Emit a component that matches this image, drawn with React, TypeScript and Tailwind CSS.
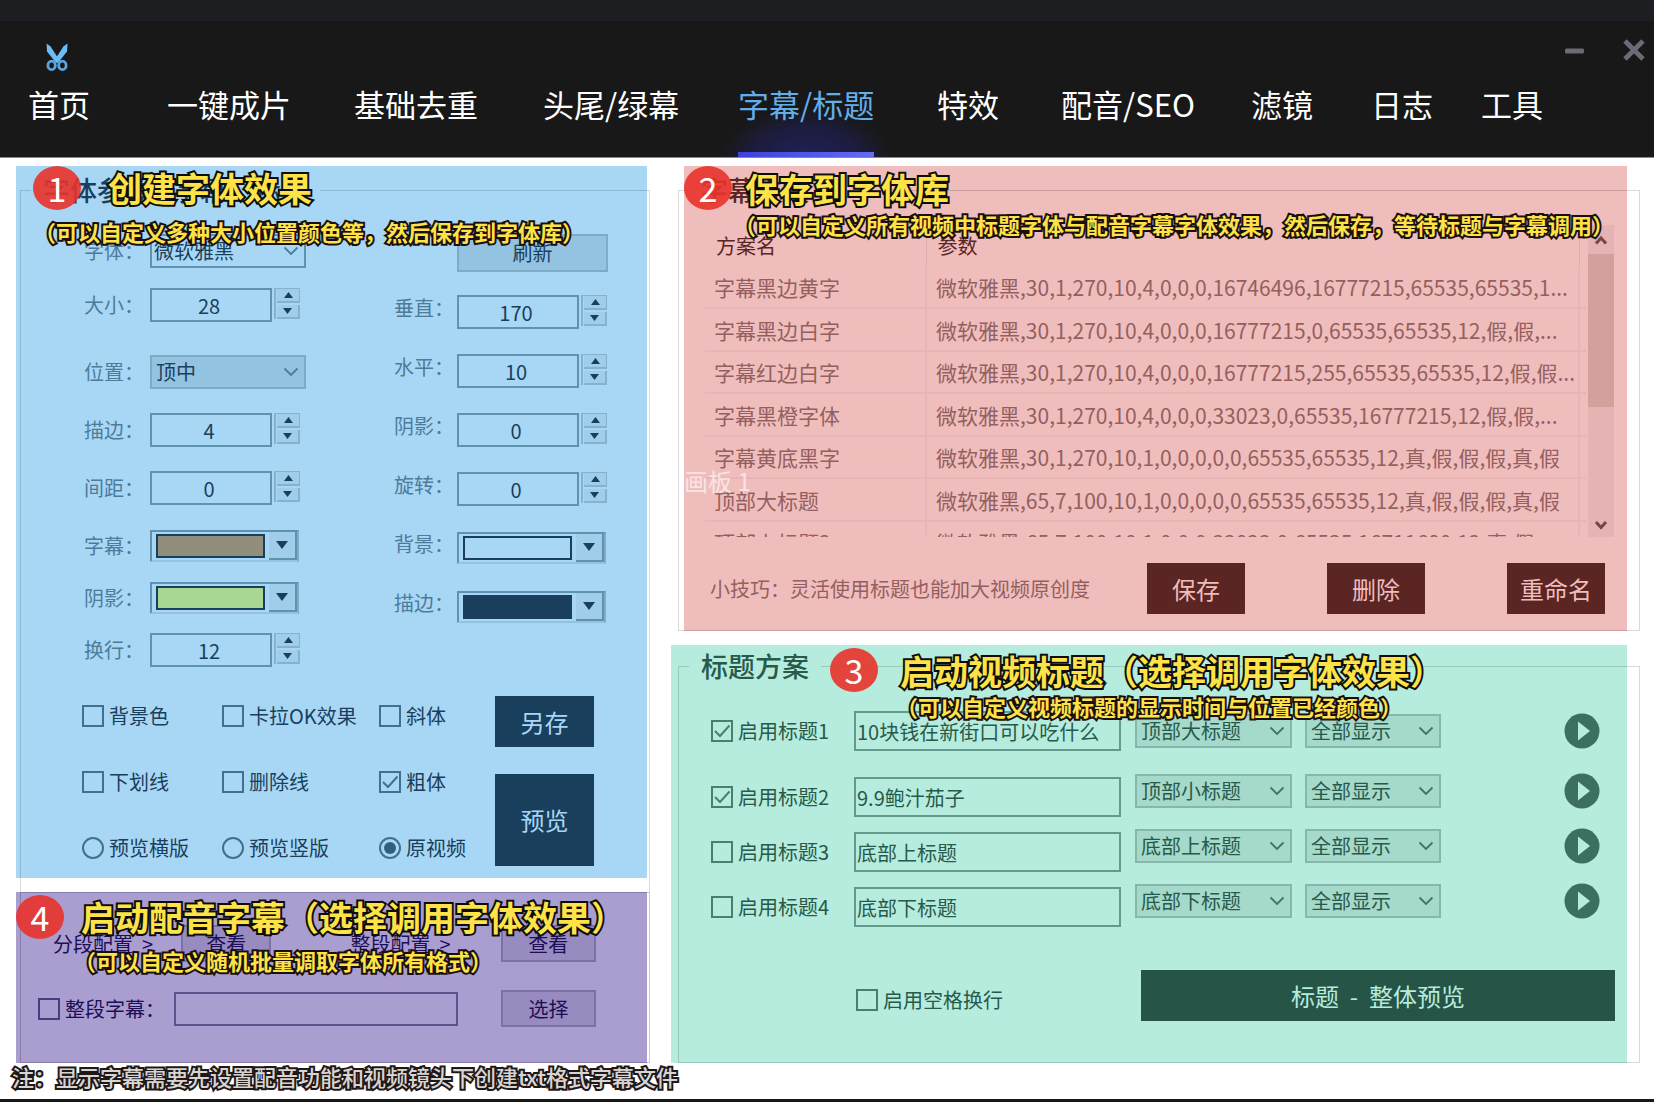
import React, { useState } from "react";

const tabs = ["首页", "一键成片", "基础去重", "头尾/绿幕", "字幕/标题", "特效", "配音/SEO", "滤镜", "日志", "工具"];

const schemes = [
  ["字幕黑边黄字", "微软雅黑,30,1,270,10,4,0,0,0,16746496,16777215,65535,65535,1..."],
  ["字幕黑边白字", "微软雅黑,30,1,270,10,4,0,0,0,16777215,0,65535,65535,12,假,假,..."],
  ["字幕红边白字", "微软雅黑,30,1,270,10,4,0,0,0,16777215,255,65535,65535,12,假,假..."],
  ["字幕黑橙字体", "微软雅黑,30,1,270,10,4,0,0,0,33023,0,65535,16777215,12,假,假,..."],
  ["字幕黄底黑字", "微软雅黑,30,1,270,10,1,0,0,0,0,0,65535,65535,12,真,假,假,假,真,假"],
  ["顶部大标题", "微软雅黑,65,7,100,10,1,0,0,0,0,0,65535,65535,12,真,假,假,假,真,假"],
  ["顶部上标题2", "微软雅黑,65,7,100,10,1,0,0,0,33023,0,65535,16711680,12,真,假"],
];

const titleRows = [
  { id: 1, on: true, text: "10块钱在新街口可以吃什么", preset: "顶部大标题", gap: "", lift: "" },
  { id: 2, on: true, text: "9.9鲍汁茄子", preset: "顶部小标题", gap: "mt-[26px]", lift: "pb-3" },
  { id: 3, on: false, text: "底部上标题", preset: "底部上标题", gap: "mt-[15px]", lift: "pb-3" },
  { id: 4, on: false, text: "底部下标题", preset: "底部下标题", gap: "mt-[15px]", lift: "pb-3" },
];

function Scissors() {
  return (
    <svg viewBox="0 0 24 28" className="h-7 w-6" fill="none" aria-hidden="true">
      <path d="M1.5 0.5 L2 8.5 L9.5 18 L12 20 L14 16.5 L5.6 3.6 Z" fill="#6cbcf5" />
      <path d="M22.5 0.5 L22 8.5 L14.5 18 L12 20 L10 16.5 L18.4 3.6 Z" fill="#6cbcf5" />
      <ellipse cx="6.6" cy="22.4" rx="3.7" ry="4.2" stroke="#5aa7e0" strokeWidth="2.8" />
      <ellipse cx="17.4" cy="22.4" rx="3.7" ry="4.2" stroke="#5aa7e0" strokeWidth="2.8" />
    </svg>
  );
}

function Chevron({ className }: { className: string }) {
  return (
    <svg viewBox="0 0 16 10" className={`pointer-events-none absolute right-[7px] top-1/2 h-[10px] w-4 -translate-y-1/2 ${className}`} fill="none" aria-hidden="true">
      <path d="M1.5 1.5 L8 8 L14.5 1.5" stroke="currentColor" strokeWidth="1.8" />
    </svg>
  );
}

function Triangle({ up = false, className }: { up?: boolean; className: string }) {
  return (
    <svg viewBox="0 0 12 8" className={className} aria-hidden="true">
      <path d={up ? "M6 0 L12 8 L0 8 Z" : "M0 0 L12 0 L6 8 Z"} fill="#1a3f5c" />
    </svg>
  );
}

function Tick({ label, checked = false, tone, labelTone }: { label: string; checked?: boolean; tone: string; labelTone: string }) {
  return (
    <label className={`flex items-center gap-[5px] whitespace-nowrap text-[20px] leading-[22px] ${labelTone}`}>
      <span className={`grid h-[22px] w-[22px] shrink-0 ${tone}`}>
        <input type="checkbox" defaultChecked={checked} className="peer col-start-1 row-start-1 appearance-none border-2 border-current" />
        <svg viewBox="0 0 22 22" fill="none" className="pointer-events-none invisible col-start-1 row-start-1 h-[22px] w-[22px] peer-checked:visible" aria-hidden="true">
          <path d="M4 11 L9 16 L18.5 5.5" stroke="currentColor" strokeWidth="2" />
        </svg>
      </span>
      {label}
    </label>
  );
}

function Radio({ label, checked = false }: { label: string; checked?: boolean }) {
  return (
    <label className="flex items-center gap-[5px] whitespace-nowrap text-[20px] leading-[22px] text-[#1a3f5c]">
      <span className="grid h-[22px] w-[22px] shrink-0 place-items-center text-[#41708f]">
        <input type="radio" name="preview-mode" defaultChecked={checked} className="peer col-start-1 row-start-1 h-[22px] w-[22px] appearance-none rounded-full border-2 border-current" />
        <span className="pointer-events-none invisible col-start-1 row-start-1 h-3 w-3 rounded-full bg-[#2f5f80] peer-checked:visible" />
      </span>
      {label}
    </label>
  );
}

function Row({ label, gap = "", wide = true, children }: { label: string; gap?: string; wide?: boolean; children: React.ReactNode }) {
  return (
    <div className={`flex h-[34px] items-center ${gap}`}>
      <span className={`shrink-0 text-[20px] text-[#4d7c9b] ${wide ? "w-[66px]" : "w-[63px] pb-2"}`}>{label}：</span>
      {children}
    </div>
  );
}

function Spinner({ name, value }: { name: string; value: string }) {
  return (
    <div className="flex items-start gap-[2px]">
      <input aria-label={name} defaultValue={value} className="h-[34px] w-[122px] border-2 border-[#5f91b1] bg-transparent pr-1 text-center text-[20px] text-[#1a3f5c] outline-none" />
      <div className="flex h-[31px] w-[26px] flex-col gap-[2px] border-l-2 border-t border-[#84b2d0] pl-px">
        <button aria-label={`${name}增加`} className="flex flex-1 items-center justify-center border-b-2 border-r border-[#84b2d0] bg-[#9fcdea]">
          <Triangle up className="h-[6px] w-[9px]" />
        </button>
        <button aria-label={`${name}减少`} className="flex flex-1 items-center justify-center border-b-2 border-r-2 border-[#84b2d0] bg-[#9fcdea]">
          <Triangle className="h-[6px] w-[9px]" />
        </button>
      </div>
    </div>
  );
}

function ColorPicker({ name, swatch }: { name: string; swatch: string }) {
  return (
    <button aria-label={`${name}颜色`} className="flex h-[32px] w-[149px] items-stretch border-2 border-[#5f91b1] border-b-[#94c3e1] border-r-[#7fadc9]">
      <span className={`my-[2px] ml-1 flex-1 border-2 border-[#1a3f5c] ${swatch}`} />
      <span className="ml-1 flex w-[28px] items-center justify-center border-b-2 border-r-2 border-[#5f91b1] bg-[#9fcdea]">
        <Triangle className="h-2 w-3" />
      </span>
    </button>
  );
}

function Badge({ n, place }: { n: number; place: string }) {
  return (
    <span className={`pointer-events-none absolute flex h-[44px] w-[48px] items-center justify-center rounded-[50%] bg-[#e8332b]/90 text-[34px] leading-[44px] text-white ${place}`}>{n}</span>
  );
}

function Headline({ text, place }: { text: string; place: string }) {
  return (
    <strong className={`pointer-events-none absolute whitespace-nowrap text-[34px] font-bold leading-[44px] text-[#fde248] [-webkit-text-stroke:4px_#0d0d0d] [paint-order:stroke_fill] ${place}`}>{text}</strong>
  );
}

function Subline({ text, place }: { text: string; place: string }) {
  return (
    <span className={`pointer-events-none absolute whitespace-nowrap text-[22px] font-bold leading-[28px] text-[#fde248] [-webkit-text-stroke:4px_#1a0f10] [paint-order:stroke_fill] ${place}`}>{text}</span>
  );
}

function GreenSelect({ name, value, width }: { name: string; value: string; width: string }) {
  return (
    <div className={`relative ${width}`}>
      <select aria-label={name} className="block h-[34px] w-full appearance-none border-2 border-[#86b8aa] bg-[#a5d9cb] pl-1 text-[20px] leading-[26px] text-[#285a4a]">
        <option>{value}</option>
      </select>
      <Chevron className="text-[#3f7565]" />
    </div>
  );
}

const legendBase = "ml-[10px] px-3 text-[27px] font-medium leading-[36px]";
const pinkButton = "h-[51px] w-[98px] bg-[#5a2523] text-[24px] text-[#f0bdbd]";

function StylePanel() {
  return (
    <section className="relative flow-root bg-[#a8d7f5] pt-[6px]">
      <fieldset className="-mb-[14px] -mr-[3px] ml-1 min-w-0 border border-b-0 border-black/15 pb-[26px]">
        <legend className={`${legendBase} text-[#1a3f5c]`}>字体参数 - 字幕、标题</legend>
        <div className="grid grid-cols-[310fr_255fr] pl-[63px] pt-[26px]">
          <div>
            <Row label="字体">
              <div className="relative w-[156px]">
                <select aria-label="字体" className="block h-[34px] w-full appearance-none border-2 border-[#5f91b1] bg-transparent pl-[2px] text-[20px] leading-[26px] text-[#1a3f5c]">
                  <option>微软雅黑</option>
                </select>
                <Chevron className="text-[#4d7c9b]" />
              </div>
            </Row>
            <Row label="大小" gap="mt-[20px]"><Spinner name="大小" value="28" /></Row>
            <Row label="位置" gap="mt-[33px]">
              <div className="relative w-[156px]">
                <select aria-label="位置" className="block h-[34px] w-full appearance-none border-2 border-[#7dabc8] bg-[#94c3e1] pl-1 text-[20px] leading-[26px] text-[#1a3f5c]">
                  <option>顶中</option>
                </select>
                <Chevron className="text-[#4d7c9b]" />
              </div>
            </Row>
            <Row label="描边" gap="mt-[24px]"><Spinner name="描边" value="4" /></Row>
            <Row label="间距" gap="mt-[24px]"><Spinner name="间距" value="0" /></Row>
            <Row label="字幕" gap="mt-[24px]"><ColorPicker name="字幕" swatch="bg-[#918f7c]" /></Row>
            <Row label="阴影" gap="mt-[18px]"><ColorPicker name="阴影" swatch="bg-[#a8d794]" /></Row>
            <Row label="换行" gap="mt-[18px]"><Spinner name="换行" value="12" /></Row>
          </div>
          <div className="flex flex-col gap-[25px] pt-[2px]">
            <div className="flex h-[34px] items-center pl-[63px]">
              <button className="h-[38px] w-[151px] border-2 border-[#7dabc8] bg-[#94c3e1] text-[20px] text-[#1a3f5c]">刷新</button>
            </div>
            <Row wide={false} label="垂直"><Spinner name="垂直" value="170" /></Row>
            <Row wide={false} label="水平"><Spinner name="水平" value="10" /></Row>
            <Row wide={false} label="阴影"><Spinner name="阴影大小" value="0" /></Row>
            <Row wide={false} label="旋转"><Spinner name="旋转" value="0" /></Row>
            <Row wide={false} label="背景"><ColorPicker name="背景" swatch="bg-transparent" /></Row>
            <Row wide={false} label="描边"><ColorPicker name="描边" swatch="bg-[#1a3f5c]" /></Row>
          </div>
        </div>
        <div className="flex pl-[61px] pr-[55px] pt-[29px]">
          <div className="grid flex-1 grid-cols-[140fr_157fr_116fr] content-start gap-y-[44px] pt-[9px]">
            <Tick label="背景色" tone="text-[#41708f]" labelTone="text-[#1a3f5c]" />
            <Tick label="卡拉OK效果" tone="text-[#41708f]" labelTone="text-[#1a3f5c]" />
            <Tick label="斜体" tone="text-[#41708f]" labelTone="text-[#1a3f5c]" />
            <Tick label="下划线" tone="text-[#41708f]" labelTone="text-[#1a3f5c]" />
            <Tick label="删除线" tone="text-[#41708f]" labelTone="text-[#1a3f5c]" />
            <Tick label="粗体" checked tone="text-[#41708f]" labelTone="text-[#1a3f5c]" />
            <Radio label="预览横版" />
            <Radio label="预览竖版" />
            <Radio label="原视频" checked />
          </div>
          <div className="flex w-[99px] flex-col gap-[27px]">
            <button className="h-[51px] bg-[#1a3f5c] text-[24px] text-[#a8d7f5]">另存</button>
            <button className="h-[92px] bg-[#1a3f5c] text-[24px] text-[#a8d7f5]">预览</button>
          </div>
        </div>
      </fieldset>
      <Badge n={1} place="left-[17px] top-0" />
      <Headline text="创建字体效果" place="left-[92px] top-0" />
      <Subline text="（可以自定义多种大小位置颜色等，然后保存到字体库）" place="left-[18px] top-[51px]" />
    </section>
  );
}

function DubbingPanel() {
  const grey = "h-[37px] border-2 border-[#7d70a8] bg-[#988bbf] text-[20px] text-[#1d0f55]";
  return (
    <section className="relative mt-[14px] bg-[#aa9dd0]">
      <fieldset className="-mr-[3px] ml-1 min-w-0 border border-black/20 pb-[35px] pt-[32px]">
        <div className="grid grid-cols-[128fr_169fr_150fr_148fr] items-center pl-8 text-[20px] text-[#1d0f55]">
          <span className="whitespace-pre">{"分段配置  >"}</span>
          <button className={`w-[90px] ${grey}`}>查看</button>
          <span className="whitespace-pre">{"整段配置  >"}</span>
          <button className={`w-[95px] ${grey}`}>查看</button>
        </div>
        <div className="mt-7 grid grid-cols-[136fr_327fr_148fr] items-center pl-[17px]">
          <Tick label="整段字幕：" tone="text-[#4a3c80]" labelTone="text-[#1d0f55]" />
          <input aria-label="整段字幕文件" className="h-[34px] w-[284px] border-2 border-[#5f5190] bg-transparent px-1 text-[20px] text-[#1d0f55] outline-none" />
          <button className={`w-[95px] ${grey}`}>选择</button>
        </div>
      </fieldset>
      <Badge n={4} place="left-0 top-[3px]" />
      <Headline text="启动配音字幕（选择调用字体效果）" place="left-[65px] top-[3px]" />
      <Subline text="（可以自定义随机批量调取字体所有格式）" place="left-[58px] top-[54px]" />
    </section>
  );
}

function LibraryPanel() {
  return (
    <section className="relative ml-[13px] bg-[#f0bdbd] pt-[6px]">
      <fieldset className="-ml-[6px] -mr-[13px] min-w-0 border border-black/15 pb-[16px]">
        <legend className={`${legendBase} text-[#5a2523]`}>字幕方案</legend>
        <div className="flex gap-[2px] pl-[26px] pr-[25px] pt-[17px]">
          <div className="h-[312px] min-w-0 flex-1 overflow-hidden">
            <table className="w-full table-fixed border-collapse whitespace-nowrap text-left text-[21px] text-[#93605f]">
              <thead>
                <tr className="h-[41px] text-[20px] text-[#5a2523]">
                  <th scope="col" className="w-[221px] border-r border-[#e2abad] pl-[11px] font-normal">方案名</th>
                  <th scope="col" className="border-r border-[#e2abad] pl-[11px] font-normal">参数</th>
                  <th scope="col" aria-label="空" className="w-[7px]" />
                </tr>
              </thead>
              <tbody>
                {schemes.map(([name, value]) => (
                  <tr key={name} className="border-b-2 border-[#e8b4b5] leading-[30px] odd:h-[42px] even:h-[43px]">
                    <td className="border-r-2 border-[#e8b4b5] pl-[9px]">{name}</td>
                    <td className="border-r-2 border-[#e8b4b5] pl-[9px]">{value}</td>
                    <td />
                  </tr>
                ))}
              </tbody>
            </table>
          </div>
          <div className="flex h-[312px] w-[26px] flex-col items-center bg-[#e6b3b4] text-[#7d4442]">
            <svg viewBox="0 0 14 10" className="mt-[10px] h-[10px] w-[14px]" fill="none" aria-hidden="true">
              <path d="M2 8.5 L7 3 L12 8.5" stroke="currentColor" strokeWidth="3" />
            </svg>
            <div className="mt-[9px] h-[153px] w-[26px] bg-[#d3a09e]" />
            <svg viewBox="0 0 14 10" className="mb-[7px] mt-auto h-[10px] w-[14px]" fill="none" aria-hidden="true">
              <path d="M2 2 L7 7.5 L12 2" stroke="currentColor" strokeWidth="3" />
            </svg>
          </div>
        </div>
        <div className="flex items-center gap-[82px] pl-[31px] pr-[34px] pt-[26px]">
          <p className="min-w-0 flex-1 whitespace-nowrap text-[20px] text-[#93605f]">小技巧：灵活使用标题也能加大视频原创度</p>
          <button className={pinkButton}>保存</button>
          <button className={pinkButton}>删除</button>
          <button className={pinkButton}>重命名</button>
        </div>
      </fieldset>
      <span className="pointer-events-none absolute left-0 top-[299px] text-[24px] leading-[32px] text-white/60">画板 1</span>
      <Badge n={2} place="left-0 top-0" />
      <Headline text="保存到字体库" place="left-[61px] top-px" />
      <Subline text="（可以自定义所有视频中标题字体与配音字幕字体效果，然后保存，等待标题与字幕调用）" place="left-[50px] top-[44px]" />
    </section>
  );
}

function TitlePanel() {
  return (
    <section className="relative mt-[14px] bg-[#b6ecde] pt-[3px]">
      <fieldset className="-mr-[13px] ml-[7px] min-w-0 border border-black/15 pb-[41px]">
        <legend className={`${legendBase} text-[#285a4a]`}>标题方案</legend>
        <div className="pl-8 pt-[27px]">
          {titleRows.map((r) => (
            <div key={r.id} className={`grid grid-cols-[143fr_281fr_170fr_259fr_75fr] grid-rows-[40px] items-center ${r.gap}`}>
              <Tick label={`启用标题${r.id}`} checked={r.on} tone="text-[#4a7f70]" labelTone="text-[#285a4a]" />
              <input aria-label={`标题${r.id}内容`} defaultValue={r.text} className="mr-[14px] h-[40px] min-w-0 border-2 border-[#649a8b] bg-transparent px-px text-[20px] text-[#285a4a] outline-none" />
              <div className={r.lift}><GreenSelect name={`标题${r.id}方案`} value={r.preset} width="w-[157px]" /></div>
              <div className={r.lift}><GreenSelect name={`标题${r.id}显示`} value="全部显示" width="w-[136px]" /></div>
              <div className={r.lift}>
                <button aria-label={`预览标题${r.id}`} className="block">
                  <svg viewBox="0 0 36 36" className="h-9 w-9" aria-hidden="true">
                    <circle cx="18" cy="18" r="17.5" fill="#3c6f60" />
                    <path d="M14 8.5 L26 18 L14 27.5 Z" fill="#b6ecde" />
                  </svg>
                </button>
              </div>
            </div>
          ))}
        </div>
        <div className="flex items-center pl-[177px] pr-6 pt-[43px]">
          <div className="flex-1 pt-2">
            <Tick label="启用空格换行" tone="text-[#4a7f70]" labelTone="text-[#285a4a]" />
          </div>
          <button className="h-[51px] w-[474px] whitespace-pre bg-[#265446] text-[24px] text-[#b6ecde]">{"标题  -  整体预览"}</button>
        </div>
      </fieldset>
      <Badge n={3} place="left-[159px] top-[3px]" />
      <Headline text="启动视频标题（选择调用字体效果）" place="left-[229px] top-1" />
      <Subline text="（可以自定义视频标题的显示时间与位置已经颜色）" place="left-[225px] top-[47px]" />
    </section>
  );
}

export default function App() {
  const [active, setActive] = useState("字幕/标题");
  return (
    <div className="overflow-hidden bg-white font-['Noto_Sans_CJK_SC',sans-serif]">
      <header className="border-b border-[#8a8a8a] bg-[#181818]">
        <div className="h-[21px] bg-[#1c1e21]" />
        <div className="flex h-[56px] items-start justify-between pl-[45px] pr-[9px]">
          <div className="pt-[22px]"><Scissors /></div>
          <div className="flex items-center gap-[38px] pt-[18px] text-[#6b6b78]">
            <button aria-label="最小化" className="block">
              <svg viewBox="0 0 22 22" className="h-[22px] w-[22px]" aria-hidden="true">
                <rect x="2" y="9.5" width="19" height="5" rx="1.5" fill="currentColor" />
              </svg>
            </button>
            <button aria-label="关闭" className="block">
              <svg viewBox="0 0 22 22" className="h-[22px] w-[22px]" fill="none" aria-hidden="true">
                <path d="M2 2 L20 20 M20 2 L2 20" stroke="currentColor" strokeWidth="4.8" />
              </svg>
            </button>
          </div>
        </div>
        <nav className="grid h-[80px] grid-cols-[139fr_187fr_189fr_195fr_199fr_124fr_190fr_120fr_110fr_173fr] pl-7">
          {tabs.map((t) => (
            <button
              key={t}
              onClick={() => setActive(t)}
              className={`relative justify-self-start whitespace-nowrap pb-[26px] text-[31px] ${t === active ? "text-[#62aeea]" : "text-white"}`}
            >
              {t === active && (
                <>
                  <span className="absolute -inset-x-4 bottom-0 h-12 bg-[radial-gradient(ellipse_at_bottom,#20205a_0%,#1c1c3c_45%,#181818_72%)]" />
                  <span className="absolute inset-x-0 bottom-0 h-[5px] bg-linear-to-r from-[#3b41dd] to-[#656af2]" />
                </>
              )}
              <span className="relative">{t}</span>
            </button>
          ))}
        </nav>
      </header>
      <main className="grid grid-cols-[631fr_956fr] items-start gap-6 pl-4 pr-[27px] pt-2">
        <div className="min-w-0">
          <StylePanel />
          <DubbingPanel />
        </div>
        <div className="min-w-0">
          <LibraryPanel />
          <TitlePanel />
        </div>
      </main>
      <footer className="border-b-[3px] border-[#181818] pb-[10px] pl-3">
        <p className="whitespace-nowrap text-[22px] font-medium leading-[26px] text-[#d8d4d2] [-webkit-text-stroke:4px_#1f1818] [paint-order:stroke_fill]">
          注：显示字幕需要先设置配音功能和视频镜头下创建txt格式字幕文件
        </p>
      </footer>
    </div>
  );
}
